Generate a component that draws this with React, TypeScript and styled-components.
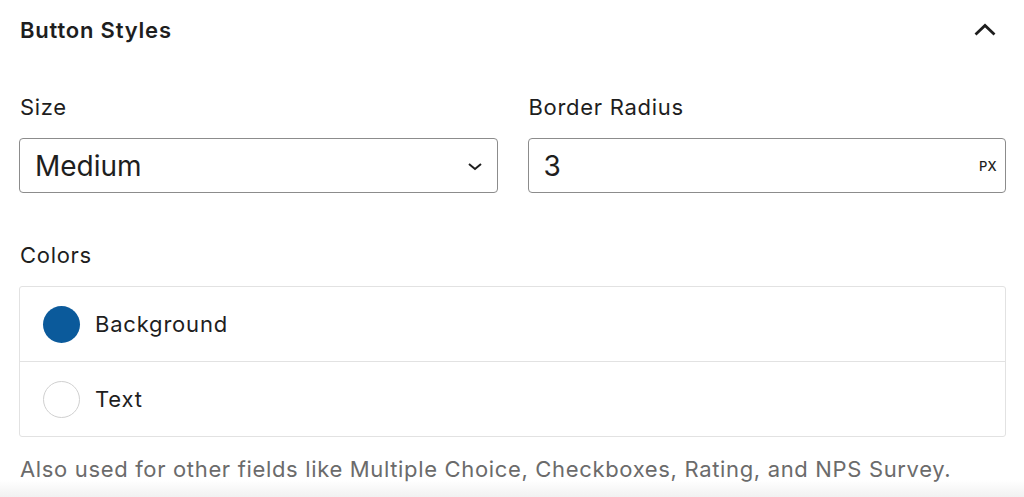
import React from 'react'
import styled, { createGlobalStyle } from 'styled-components'

const GlobalStyle = createGlobalStyle`
  html, body {
    margin: 0;
    padding: 0;
    background: #ffffff;
  }
  body {
    font-family: Inter, 'Noto Sans', sans-serif;
    color: #1e1e1e;
  }
`

const Panel = styled.div`
  width: 1024px;
  height: 497px;
  box-sizing: border-box;
  padding: 0 18px 0 20px;
  overflow: hidden;
  background: linear-gradient(to bottom, #ffffff 0, #ffffff 480px, #f1f1f1 497px);
`

const Header = styled.div`
  display: flex;
  align-items: center;
  justify-content: space-between;
  height: 60px;
  padding-right: 9px;
`

const Title = styled.h2`
  margin: 0;
  font-size: 22px;
  font-weight: 600;
  letter-spacing: 0.8px;
`

const Fields = styled.div`
  display: grid;
  grid-template-columns: 1fr 1fr;
  column-gap: 31px;
  margin-top: 29px;
`

const Field = styled.div`
  display: flex;
  flex-direction: column;
`

const Label = styled.label`
  display: block;
  font-size: 22px;
  letter-spacing: 0.7px;
  line-height: 36px;
  margin-bottom: 13px;
`

const Control = styled.div`
  height: 55px;
  box-sizing: border-box;
  border: 1.5px solid #8c8c8c;
  border-radius: 4px;
  display: flex;
  align-items: center;
  padding: 0 8px 0 15px;
  margin-left: -1px;
`

const Value = styled.span`
  flex: 1;
  font-size: 28px;
`

const Unit = styled.span`
  font-size: 13px;
  font-weight: 500;
  letter-spacing: 0.3px;
`

const ColorsLabel = styled(Label)`
  margin-top: 44px;
  margin-bottom: 13px;
`

const ColorList = styled.div`
  border: 1.5px solid #e2e2e2;
  border-radius: 3px;
  margin-left: -1px;
`

const ColorRow = styled.div<{ last?: boolean }>`
  height: 74px;
  display: flex;
  align-items: center;
  gap: 15px;
  padding-left: 23px;
  border-bottom: ${(p) => (p.last ? 'none' : '1.5px solid #e2e2e2')};
  font-size: 22px;
  letter-spacing: 0.8px;
`

const Swatch = styled.span<{ fill?: string }>`
  width: 37px;
  height: 37px;
  border-radius: 50%;
  box-sizing: border-box;
  background: ${(p) => p.fill || '#ffffff'};
  border: ${(p) => (p.fill ? 'none' : '1.5px solid #d0d0d0')};
`

const Help = styled.p`
  margin: 19px 0 0;
  font-size: 22px;
  line-height: 27px;
  letter-spacing: 0.66px;
  color: #6b6b6b;
`

const ChevronUp = () => (
  <svg width='24' height='24' viewBox='0 0 24 24' fill='none'>
    <path d='M2.5 16.5 12 7.5l9.5 9' stroke='#1e1e1e' strokeWidth='2.8' />
  </svg>
)

const ChevronDown = () => (
  <svg width='24' height='24' viewBox='0 0 24 24' fill='none' style={{ marginRight: 2 }}>
    <path d='M6 10l6 5 6-5' stroke='#1e1e1e' strokeWidth='2' />
  </svg>
)

const App = () => (
  <>
    <GlobalStyle />
    <Panel>
      <Header>
        <Title>Button Styles</Title>
        <ChevronUp />
      </Header>
      <Fields>
        <Field>
          <Label>Size</Label>
          <Control>
            <Value>Medium</Value>
            <ChevronDown />
          </Control>
        </Field>
        <Field>
          <Label>Border Radius</Label>
          <Control>
            <Value>3</Value>
            <Unit>PX</Unit>
          </Control>
        </Field>
      </Fields>
      <ColorsLabel>Colors</ColorsLabel>
      <ColorList>
        <ColorRow>
          <Swatch fill='#0b5a9b' />
          Background
        </ColorRow>
        <ColorRow last>
          <Swatch />
          Text
        </ColorRow>
      </ColorList>
      <Help>Also used for other fields like Multiple Choice, Checkboxes, Rating, and NPS Survey.</Help>
    </Panel>
  </>
)

export default App
